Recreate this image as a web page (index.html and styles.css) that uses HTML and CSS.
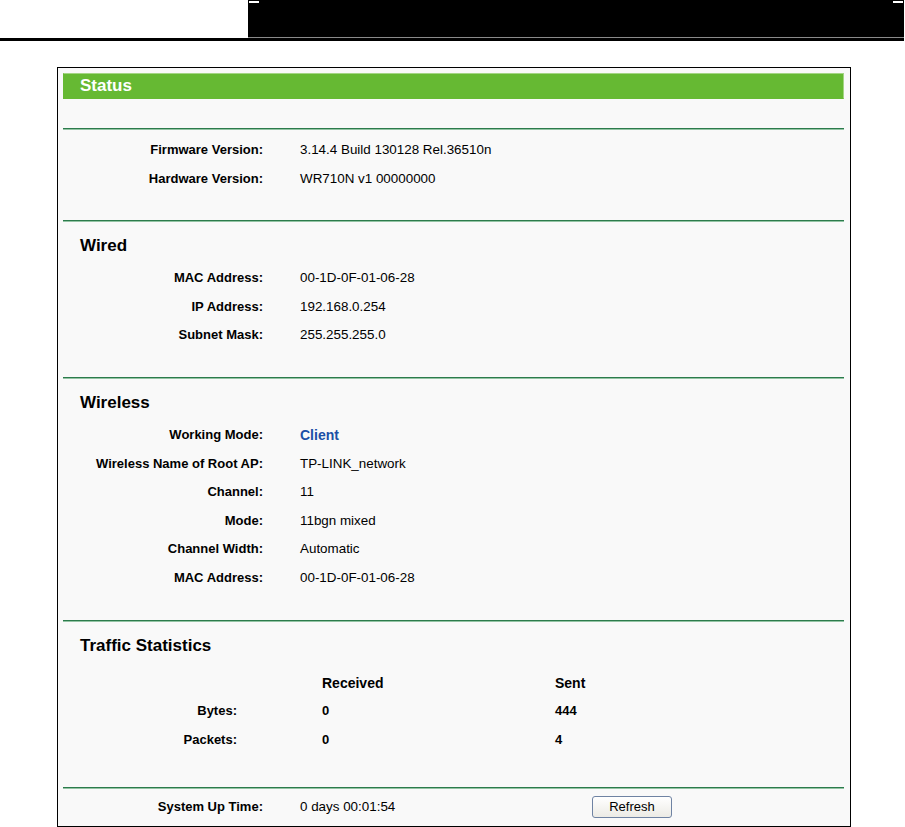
FILE: index.html
```html
<!DOCTYPE html>
<html lang="en">
<head>
    <meta charset="UTF-8">
    <title>Status</title>
    <link rel="stylesheet" href="styles.css">
</head>
<body>
    <div class="topbar">
        <div class="topbar-blank"></div>
        <div class="topbar-black">
            <span class="tick"></span>
            <span class="tick"></span>
        </div>
    </div>
    <div class="top-rule"></div>

    <div class="frame">
        <div class="title">Status</div>
        <div class="title-gap"></div>

        <div class="rule"></div>
        <div class="section first">
            <div class="row"><span class="label">Firmware Version:</span><span class="value">3.14.4 Build 130128 Rel.36510n</span></div>
            <div class="row"><span class="label">Hardware Version:</span><span class="value">WR710N v1 00000000</span></div>
        </div>

        <div class="rule"></div>
        <div class="section">
            <h2>Wired</h2>
            <div class="row"><span class="label">MAC Address:</span><span class="value">00-1D-0F-01-06-28</span></div>
            <div class="row"><span class="label">IP Address:</span><span class="value">192.168.0.254</span></div>
            <div class="row"><span class="label">Subnet Mask:</span><span class="value">255.255.255.0</span></div>
        </div>

        <div class="rule"></div>
        <div class="section">
            <h2>Wireless</h2>
            <div class="row"><span class="label">Working Mode:</span><span class="value mode">Client</span></div>
            <div class="row"><span class="label">Wireless Name of Root AP:</span><span class="value">TP-LINK_network</span></div>
            <div class="row"><span class="label">Channel:</span><span class="value">11</span></div>
            <div class="row"><span class="label">Mode:</span><span class="value">11bgn mixed</span></div>
            <div class="row"><span class="label">Channel Width:</span><span class="value">Automatic</span></div>
            <div class="row"><span class="label">MAC Address:</span><span class="value">00-1D-0F-01-06-28</span></div>
        </div>

        <div class="rule"></div>
        <div class="section traffic">
            <h2>Traffic Statistics</h2>
            <div class="stats">
                <span class="label"></span><span class="num head">Received</span><span class="num head">Sent</span>
                <span class="label">Bytes:</span><span class="num">0</span><span class="num">444</span>
                <span class="label">Packets:</span><span class="num">0</span><span class="num">4</span>
            </div>
        </div>

        <div class="rule"></div>
        <div class="uptime">
            <span class="label">System Up Time:</span>
            <span class="value">0 days 00:01:54</span>
            <button>Refresh</button>
        </div>
    </div>
</body>
</html>
```

FILE: styles.css
```css
* {
    box-sizing: border-box;
}
body {
    margin: 0;
    background-color: #fff;
    font-family: "Liberation Sans", Arial, sans-serif;
    font-size: 13px;
    color: #000;
}
.topbar {
    display: flex;
    height: 38px;
}
.topbar-blank {
    width: 248px;
}
.topbar-black {
    flex: 1;
    margin-right: 1px;
    display: flex;
    justify-content: space-between;
    align-items: flex-start;
    padding: 1px 1px 0 1px;
    background-color: #000;
    border-bottom: 1px solid #8a8a8a;
}
.tick {
    width: 10px;
    height: 2px;
    background-color: #fff;
}
.top-rule {
    height: 3px;
    margin-right: 1px;
    background-color: #000;
}
.frame {
    width: 794px;
    margin: 26px 0 0 57px;
    padding: 5px 6px 5px 5px;
    border: 1px solid #000;
    background-color: #f9f9f9;
}
.title {
    height: 26px;
    padding-left: 16px;
    line-height: 24px;
    font-size: 17px;
    font-weight: bold;
    color: #fff;
    background-color: #66b933;
    border: 1px solid #a4d584;
    border-left-color: #66b933;
    border-bottom-color: #66b933;
}
.title-gap {
    height: 29px;
}
.rule {
    border-top: 1px solid #2c7b4c;
    border-bottom: 1px solid #93c4a4;
}
.section {
    padding: 12px 0 27px;
}
.section.first {
    padding: 6px 0 27px;
}
.section.traffic {
    padding-bottom: 33px;
}
h2 {
    margin: 0 0 6px 17px;
    line-height: 24px;
    font-size: 17px;
    font-weight: bold;
}
.row {
    display: grid;
    grid-template-columns: 200px 1fr;
    column-gap: 37px;
    line-height: 28.6px;
}
.label {
    text-align: right;
    font-weight: bold;
}
.value {
    font-size: 13.4px;
}
.mode {
    font-size: 14px;
    font-weight: bold;
    color: #1c4fa6;
}
.stats {
    display: grid;
    grid-template-columns: 259px 233px 1fr;
    line-height: 28.6px;
    margin-top: 11px;
}
.stats .label {
    padding-right: 85px;
}
.num {
    font-weight: bold;
}
.num.head {
    font-size: 14px;
}
.uptime {
    display: grid;
    grid-template-columns: 200px 292px auto;
    column-gap: 37px;
    align-items: center;
    height: 32px;
    padding-top: 3px;
}
button {
    justify-self: start;
    margin-left: -37px;
    width: 80px;
    height: 22px;
    padding: 0;
    font-family: "Liberation Sans", Arial, sans-serif;
    font-size: 13px;
    color: #000;
    background: linear-gradient(#ffffff, #ecebe5);
    border: 1px solid #6f83a3;
    border-radius: 3px;
}
```
